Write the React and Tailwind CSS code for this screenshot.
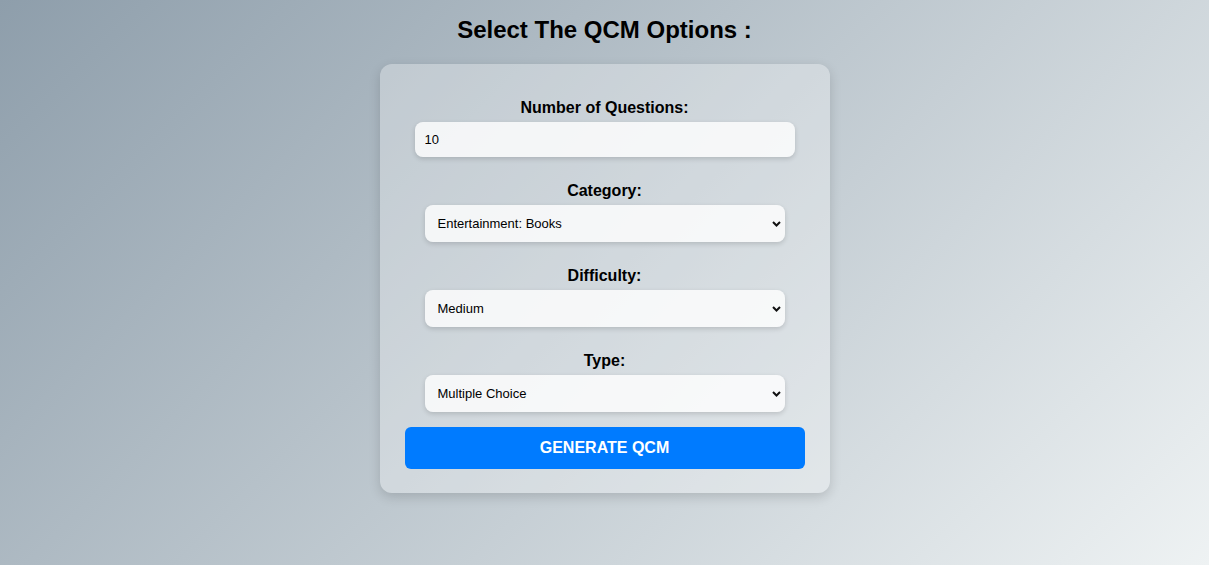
import React, { useState } from 'react';

const Chevron = () => (
  <svg
    className="pointer-events-none absolute right-[4px] top-1/2 -translate-y-1/2"
    width="9"
    height="6"
    viewBox="0 0 9 6"
    fill="none"
  >
    <path d="M1 1l3.5 3.5L8 1" stroke="#111" strokeWidth="2" />
  </svg>
);

const SelectField = ({ label, value, onChange, options }) => (
  <div className="mt-[25px] flex flex-col items-center">
    <label className="text-[16px] leading-[18px] font-bold text-black mb-[5px]">{label}</label>
    <div className="relative w-[360px]">
      <select
        value={value}
        onChange={onChange}
        className="w-full h-[37px] appearance-none rounded-[8px] bg-white/80 pl-[13px] pr-[20px] text-[13px] text-black shadow-[0_2px_5px_rgba(0,0,0,0.15)] outline-none"
      >
        {options.map((o) => (
          <option key={o}>{o}</option>
        ))}
      </select>
      <Chevron />
    </div>
  </div>
);

const App = () => {
  const [form, setForm] = useState({
    amount: '10',
    category: 'Entertainment: Books',
    difficulty: 'Medium',
    type: 'Multiple Choice',
  });

  const set = (key) => (e) => setForm({ ...form, [key]: e.target.value });

  return (
    <div className="min-h-screen bg-[linear-gradient(135deg,#8e9eab,#eef2f3)] font-['Liberation_Sans',Arial,sans-serif] flex flex-col items-center pt-[16px]">
      <h1 className="text-[24px] leading-[28px] font-bold text-black mb-[20px]">Select The QCM Options :</h1>

      <form
        onSubmit={(e) => e.preventDefault()}
        className="w-[450px] rounded-[12px] bg-white/30 px-[25px] pt-[11px] pb-[24px] shadow-[0_4px_12px_rgba(0,0,0,0.15)]"
      >
        <div className="mt-[24px] flex flex-col items-center">
          <label className="text-[16px] leading-[18px] font-bold text-black mb-[5px]">Number of Questions:</label>
          <input
            type="number"
            value={form.amount}
            onChange={set('amount')}
            className="w-[380px] h-[35px] rounded-[8px] bg-white/80 px-[10px] text-[13px] text-black shadow-[0_2px_5px_rgba(0,0,0,0.15)] outline-none [appearance:textfield]"
          />
        </div>

        <SelectField
          label="Category:"
          value={form.category}
          onChange={set('category')}
          options={['General Knowledge', 'Entertainment: Books', 'Entertainment: Film', 'Science & Nature']}
        />
        <SelectField
          label="Difficulty:"
          value={form.difficulty}
          onChange={set('difficulty')}
          options={['Easy', 'Medium', 'Hard']}
        />
        <SelectField
          label="Type:"
          value={form.type}
          onChange={set('type')}
          options={['Multiple Choice', 'True / False']}
        />

        <button
          type="submit"
          className="mt-[15px] w-full h-[42px] rounded-[6px] bg-[#007bff] text-white text-[16px] font-bold uppercase"
        >
          Generate QCM
        </button>
      </form>
    </div>
  );
};

export default App;
